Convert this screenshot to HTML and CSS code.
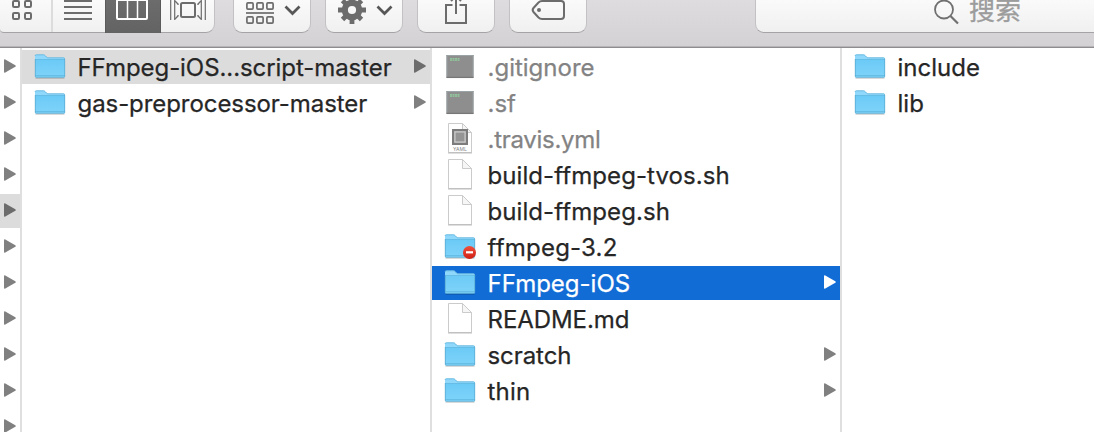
FILE: index.html
```
<!DOCTYPE html>
<html lang="zh">
<head>
<meta charset="utf-8">
<title>Finder</title>
<link rel="stylesheet" href="styles.css">
</head>
<body>
<svg class="defs" width="0" height="0">
  <defs>
    <linearGradient id="blue" x1="0" y1="0" x2="0" y2="1"><stop offset="0" stop-color="#6bcaf6"/><stop offset="1" stop-color="#7fd3f9"/></linearGradient>
    <linearGradient id="red" x1="0" y1="0" x2="0" y2="1"><stop offset="0" stop-color="#f0503c"/><stop offset="1" stop-color="#cf1f16"/></linearGradient>
    <symbol id="folder" viewBox="0 0 32 32">
      <path d="M1.500 28h29" stroke="#000" stroke-opacity=".25" stroke-width="1.200"/>
      <path d="M1 6Q1 4.500 2.500 4.500h7q1 0 1.800 1l1.200 1.300q.6.700 1.600.700h15.400q1.500 0 1.500 1.500V25H1z" fill="#8fd8fb"/>
      <path d="M1 9.500h30V26.500q0 1-1 1H2q-1 0-1-1z" fill="url(#blue)"/>
      <path d="M1 6Q1 4.800 2.500 4.800h7q1 0 1.800 1l1.200 1.300q.600.700 1.600.700h15.400q1.200 0 1.200 1.200" fill="none" stroke="#62b4da" stroke-width=".8"/>
      <path d="M1 9.500h30M1 25.500h30" stroke="#5bb4dd" stroke-width=".7"/>
      <path d="M1.300 9v17.300q0 .900 1 .900h27.400q1 0 1-.900V9" fill="none" stroke="#5aabd2" stroke-width=".8"/>
    </symbol>
    <symbol id="doc" viewBox="0 0 32 32">
      <path d="M4.500 1.500h14l9 9v20h-23z" fill="#fff" stroke="#cbcbcb"/>
      <path d="M4 31h24" stroke="#b0b0b0" stroke-width=".8"/>
      <path d="M18.500 1.500v9h9z" fill="#f6f6f6" stroke="#cbcbcb"/>
    </symbol>
    <symbol id="exec" viewBox="0 0 32 32">
      <path d="M2.500 5h27v23h-27z" fill="#8e8e8e"/>
      <path d="M2.500 5.500h27" stroke="#9aa3a6"/>
      <path d="M3 5v22M29 5v22" stroke="#989ea1"/>
      <path d="M2.500 27.400h27" stroke="#777" stroke-width="1.300"/>
      <path d="M6 9.500h2m.5 0h2m.5 0h2m.5 0h2" stroke="#92d6a0" stroke-width="2.400"/>
      <path d="M6 9.700h10" stroke="#8e8e8e" stroke-width=".5"/>
    </symbol>
    <symbol id="arrow" viewBox="0 0 12 16"><path d="M0 2.200Q0 .800 1.300 1.500L11.300 7.200q1.100.8 0 1.600L1.300 14.500Q0 15.200 0 13.800z" fill="currentColor"/></symbol>
    <symbol id="chevron" viewBox="0 0 18 12"><path d="M2 2l7 7 7-7" fill="none" stroke="#575757" stroke-width="2.700"/></symbol>
  </defs>
</svg>
<div class="window">
  <header class="toolbar">
    <div class="segments">
      <div class="segment seg-icons">
        <svg width="50" height="32" fill="none" stroke="#6c6c6c" stroke-width="2"><rect x="13" y="1" width="6" height="6" rx="1.200"/><rect x="25" y="1" width="6" height="6" rx="1.200"/><rect x="13" y="13" width="6" height="6" rx="1.200"/><rect x="25" y="13" width="6" height="6" rx="1.200"/></svg>
      </div>
      <div class="segment seg-list">
        <svg width="52" height="32" stroke="#6c6c6c" stroke-width="2"><path d="M11 1h28M11 7h28M11 13h28M11 19h28"/></svg>
      </div>
      <div class="segment seg-columns">
        <svg width="54" height="32"><rect x="11" y="0" width="30" height="19" rx="1" fill="none" stroke="#fff" stroke-width="2"/><path d="M21.500 0v19M31.500 0v19" stroke="#fff" stroke-width="1.500"/></svg>
      </div>
      <div class="segment seg-flow">
        <svg width="52" height="32" fill="none" stroke="#6c6c6c" stroke-width="2"><rect x="20" y="3" width="14" height="14" rx="1.500"/><path d="M9.700 0v20M13.700 0v20M40.300 0v20M44.300 0v20" stroke-width="1.200"/><path d="M14 1l3 3v1M14 19l3-3v-1M40 1l-3 3v1M40 19l-3-3v-1" stroke-width="1.400"/></svg>
      </div>
    </div>
    <div class="button arrange">
      <svg width="76" height="32" fill="none" stroke="#6c6c6c" stroke-width="1.700"><rect x="12.900" y="2.900" width="6.200" height="6.200" rx="1"/><rect x="22.900" y="2.900" width="6.200" height="6.200" rx="1"/><rect x="32.900" y="2.900" width="6.200" height="6.200" rx="1"/><path d="M12 13h28"/><rect x="12.900" y="16.900" width="6.200" height="6.200" rx="1"/><rect x="22.900" y="16.900" width="6.200" height="6.200" rx="1"/><rect x="32.900" y="16.900" width="6.200" height="6.200" rx="1"/><use href="#chevron" x="49.500" y="4.500" width="18" height="12"/></svg>
    </div>
    <div class="button action">
      <svg width="76" height="32"><g transform="translate(26 10)"><circle r="7.200" fill="none" stroke="#6c6c6c" stroke-width="6.200"/><path d="M0-14V-9M0 14V9M-14 0H-9M14 0H9M-9.500-9.500L-6-6M9.500 9.500L6 6M9.500-9.500L6-6M-9.500 9.500L-6 6" stroke="#6c6c6c" stroke-width="4.800"/></g><use href="#chevron" x="49.500" y="4.500" width="18" height="12"/></svg>
    </div>
    <div class="button share">
      <svg width="76" height="32" fill="none" stroke="#6c6c6c" stroke-width="2"><path d="M34.500 5H28v18h20V5h-6.500M38 14V0M33 1l5-5 5 5"/></svg>
    </div>
    <div class="button tag">
      <svg width="76" height="32" fill="none" stroke="#6c6c6c" stroke-width="2"><path d="M32 1h19q3 0 3 3v12q0 3-3 3H32q-2 0-3.500-1.500l-5-5.500q-1.700-2 0-4l5-5.500Q30 1 32 1z"/><circle cx="29" cy="10" r="2" fill="#6c6c6c" stroke="none"/></svg>
    </div>
    <div class="search">
      <svg width="26" height="26" fill="none" stroke="#707070" stroke-width="1.800"><circle cx="11" cy="9.500" r="9"/><path d="M17.500 16L25 23.500" stroke-width="2.200"/></svg>
      <span>搜索</span>
    </div>
  </header>
  <main class="browser">
    <section class="column parents">
      <div class="row"><svg class="arrow"><use href="#arrow"/></svg></div>
      <div class="row"><svg class="arrow"><use href="#arrow"/></svg></div>
      <div class="row"><svg class="arrow"><use href="#arrow"/></svg></div>
      <div class="row"><svg class="arrow"><use href="#arrow"/></svg></div>
      <div class="row path"><svg class="arrow"><use href="#arrow"/></svg></div>
      <div class="row"><svg class="arrow"><use href="#arrow"/></svg></div>
      <div class="row"><svg class="arrow"><use href="#arrow"/></svg></div>
      <div class="row"><svg class="arrow"><use href="#arrow"/></svg></div>
      <div class="row"><svg class="arrow"><use href="#arrow"/></svg></div>
      <div class="row"><svg class="arrow"><use href="#arrow"/></svg></div>
      <div class="row"><svg class="arrow"><use href="#arrow"/></svg></div>
    </section>
    <section class="column">
      <div class="row path"><svg class="icon"><use href="#folder"/></svg><span class="name tight">FFmpeg-iOS...script-master</span><svg class="arrow"><use href="#arrow"/></svg></div>
      <div class="row"><svg class="icon"><use href="#folder"/></svg><span class="name tight">gas-preprocessor-master</span><svg class="arrow"><use href="#arrow"/></svg></div>
    </section>
    <section class="column">
      <div class="row hidden-file"><svg class="icon"><use href="#exec"/></svg><span class="name">.gitignore</span></div>
      <div class="row hidden-file"><svg class="icon"><use href="#exec"/></svg><span class="name">.sf</span></div>
      <div class="row hidden-file"><svg class="icon" viewBox="0 0 32 32"><use href="#doc"/><rect x="9" y="8" width="14" height="14" fill="#a8a8a8" stroke="#7c7c7c" stroke-width="2"/><rect x="11" y="10" width="10" height="10" fill="#959595" stroke="#d0d0d0"/><text class="yaml" x="16" y="29" text-anchor="middle">YAML</text></svg><span class="name tighter">.travis.yml</span></div>
      <div class="row"><svg class="icon"><use href="#doc"/></svg><span class="name loose">build-ffmpeg-tvos.sh</span></div>
      <div class="row"><svg class="icon"><use href="#doc"/></svg><span class="name loose">build-ffmpeg.sh</span></div>
      <div class="row"><svg class="icon" viewBox="0 0 32 32"><use href="#folder"/><circle cx="25.500" cy="22.500" r="6.500" fill="url(#red)"/><path d="M22 22.300h7" stroke="#fff" stroke-width="2.200"/></svg><span class="name looser">ffmpeg-3.2</span></div>
      <div class="row selected"><svg class="icon"><use href="#folder"/></svg><span class="name">FFmpeg-iOS</span><svg class="arrow"><use href="#arrow"/></svg></div>
      <div class="row"><svg class="icon"><use href="#doc"/></svg><span class="name tight">README.md</span></div>
      <div class="row"><svg class="icon"><use href="#folder"/></svg><span class="name tight">scratch</span><svg class="arrow"><use href="#arrow"/></svg></div>
      <div class="row"><svg class="icon"><use href="#folder"/></svg><span class="name looser">thin</span><svg class="arrow"><use href="#arrow"/></svg></div>
    </section>
    <section class="column last">
      <div class="row"><svg class="icon"><use href="#folder"/></svg><span class="name">include</span></div>
      <div class="row"><svg class="icon"><use href="#folder"/></svg><span class="name">lib</span></div>
    </section>
  </main>
</div>
</body>
</html>
```
FILE: styles.css
```
* { box-sizing: border-box; }
body { margin: 0; background: #fff; color: #262626; font-family: Inter, "Noto Sans CJK SC", sans-serif; }
svg { display: block; flex: none; }
.defs { height: 0; }
.window { width: 1094px; height: 432px; overflow: hidden; display: flex; flex-direction: column; }
.toolbar { flex: none; height: 48px; display: flex; align-items: flex-start; gap: 14px; background: linear-gradient(#dedcdf, #d3d1d4); border-bottom: 1px solid #8f8c90; box-shadow: inset 0 -1px #b7b4b8; }
.segments, .button, .search { flex: none; height: 33px; background: linear-gradient(#fafafa, #f0f0f0); border: 1px solid #c3c1c4; border-top: 0; border-bottom-color: #a5a3a6; }
.segments { width: 215px; display: flex; border-left: 0; border-radius: 0 0 9px 4px; margin-right: 4px; }
.segment { flex: none; height: 32px; }
.seg-icons { width: 53px; border-right: 2px solid #dcdcdc; }
.seg-list { width: 52px; }
.seg-columns { width: 56px; height: 33px; background: linear-gradient(#6c6c6c, #636363); border: solid #5a5a5a; border-width: 0 1px; }
.button { width: 78px; border-radius: 0 0 9px 9px; }
.search { width: 339px; margin-left: 154px; border-right: 0; border-radius: 0 0 0 9px; display: flex; padding-left: 177px; gap: 10px; color: #9c9c9c; font: 26px/25px "Noto Sans CJK SC", sans-serif; -webkit-text-stroke: .3px; }
.search span { margin-top: -4px; }
.browser { flex: 1; min-height: 0; display: flex; }
.column { width: 410px; flex: none; padding-top: 2px; border-right: 2px solid #dfdfdf; }
.parents { width: 22px; }
.last { width: 252px; border-right: 0; }
.row { height: 34px; margin-bottom: 2px; padding: 0 4px 0 12px; display: flex; align-items: center; }
.parents .row { padding-left: 4px; }
.icon { width: 32px; height: 32px; margin-top: -2px; }
.name { margin-left: 11.500px; font-size: 24px; line-height: 34px; white-space: nowrap; margin-top: 1px; -webkit-text-stroke: .25px; }
.tight { letter-spacing: -.07px; }
.tighter { letter-spacing: -.28px; }
.loose { letter-spacing: .08px; }
.looser { letter-spacing: .22px; }
.arrow { width: 12px; height: 16px; margin-left: auto; margin-top: -2px; color: #808080; }
.path { background: #dcdcdc; }
.path .arrow { color: #6c6c6c; }
.hidden-file { color: #838383; }
.selected { background: #116cd6; color: #fff; }
.selected .arrow { color: #fff; }
.yaml { font: 5px Inter, sans-serif; fill: #888; }
```
